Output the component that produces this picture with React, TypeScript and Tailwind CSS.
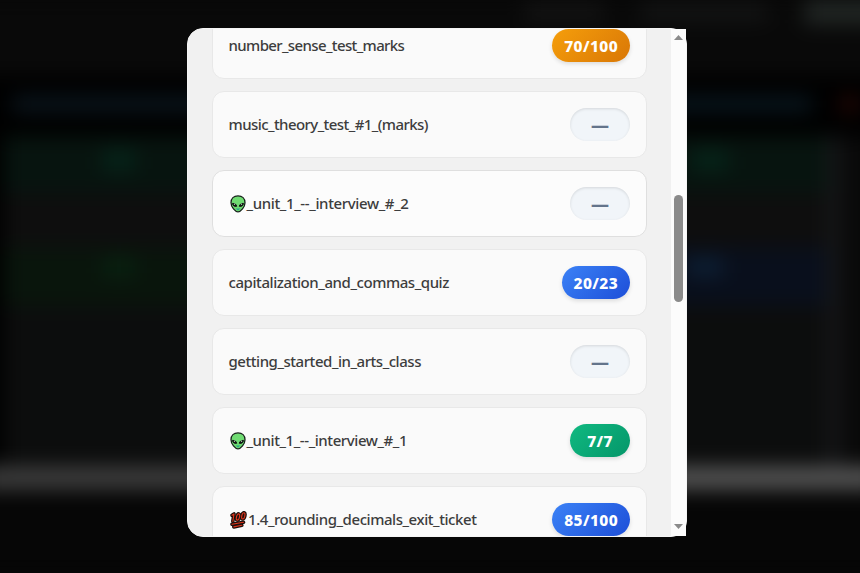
import React from "react";

type Tone = "amber" | "blue" | "green" | "empty";
type Icon = "alien" | "hundred";

interface Row {
  label: string;
  score: string;
  tone: Tone;
  icon?: Icon;
  active?: boolean;
  tracking: string;
}

const rows: Row[] = [
  { label: "number_sense_test_marks", score: "70/100", tone: "amber", tracking: "tracking-[-0.63px]" },
  { label: "music_theory_test_#1_(marks)", score: "—", tone: "empty", tracking: "tracking-[-0.57px]" },
  { label: "_unit_1_--_interview_#_2", score: "—", tone: "empty", icon: "alien", active: true, tracking: "tracking-[-0.36px]" },
  { label: "capitalization_and_commas_quiz", score: "20/23", tone: "blue", tracking: "tracking-[-0.43px]" },
  { label: "getting_started_in_arts_class", score: "—", tone: "empty", tracking: "tracking-[-0.46px]" },
  { label: "_unit_1_--_interview_#_1", score: "7/7", tone: "green", icon: "alien", tracking: "tracking-[-0.42px]" },
  { label: "1.4_rounding_decimals_exit_ticket", score: "85/100", tone: "blue", icon: "hundred", tracking: "tracking-[-0.44px]" },
];

const tones: Record<Tone, string> = {
  amber: "bg-linear-[135deg,#f59e0b,#d97706] text-white shadow-[0_2px_4px_rgba(0,0,0,0.12)]",
  blue: "bg-linear-[135deg,#3b82f6,#1d4ed8] text-white shadow-[0_2px_4px_rgba(0,0,0,0.12)]",
  green: "bg-linear-[135deg,#10b981,#059669] text-white shadow-[0_2px_4px_rgba(0,0,0,0.12)]",
  empty: "bg-[#f1f5f9] text-[#64748b] shadow-[inset_0_1px_3px_rgba(0,0,0,0.12)]",
};

function Alien() {
  return (
    <svg className="h-[18px] w-[18px] shrink-0" viewBox="0 0 18 18">
      <path d="M9 .9C4.800.9 2 3.700 2 7.700c0 4.200 4.300 9.100 7 9.100s7-4.900 7-9.100C16 3.700 13.200.9 9 .9Z" fill="#6fdb72" stroke="#17221b" strokeWidth="1.300" />
      <path d="M3.500 8.400c2.200-.1 3.900.9 4.200 2.900-2.200.5-4-.7-4.200-2.900ZM14.500 8.400c-2.200-.1-3.900.9-4.200 2.900 2.200.5 4-.7 4.200-2.900Z" fill="#101713" stroke="#101713" strokeWidth="1" />
      <path d="M4.900 9.200h1.100M12 9.200h1.100" stroke="#e8ffe9" strokeWidth="1" />
      <path d="M6.700 13.600h4.600L9 15.600Z" fill="#25a58a" />
    </svg>
  );
}

function Hundred() {
  return (
    <svg className="h-[18px] w-[19px] shrink-0" viewBox="0 0 19 18" fill="none" strokeLinecap="round" strokeLinejoin="round">
      <g stroke="#1c0f0c" strokeWidth="3.600">
        <path d="M3 4.200 5 3 3.800 10.300" />
        <ellipse cx="9" cy="6" rx="1.500" ry="3.200" transform="rotate(14 9 6)" />
        <ellipse cx="14.300" cy="4.900" rx="1.500" ry="3.200" transform="rotate(14 14.300 4.900)" />
        <path d="M3 13.300 14.500 11.300M4.800 15.900 12.800 14.300" />
      </g>
      <g stroke="#e0351b" strokeWidth="1.100">
        <path d="M3 4.200 5 3 3.800 10.300" />
        <ellipse cx="9" cy="6" rx="1.500" ry="3.200" transform="rotate(14 9 6)" />
        <ellipse cx="14.300" cy="4.900" rx="1.500" ry="3.200" transform="rotate(14 14.300 4.900)" />
        <path d="M3 13.300 14.500 11.300M4.800 15.900 12.800 14.300" />
      </g>
    </svg>
  );
}

function ScoreRow({ row }: { row: Row }) {
  return (
    <div className={`flex h-[67px] shrink-0 items-center justify-between rounded-xl border pr-4 pl-[15.5px] ${row.active ? "border-[#dfdfdf] bg-[#fcfcfc]" : "border-[#e8e8e8] bg-[#fafafa]"}`}>
      <span className="flex items-center text-[15px] font-medium text-[#3d3d3d]">
        {row.icon === "alien" && <Alien />}
        {row.icon === "hundred" && <span className="pl-[0.5px]"><Hundred /></span>}
        <span className={`whitespace-nowrap ${row.tracking}`}>{row.label}</span>
      </span>
      <span className={`flex h-[33px] min-w-[60px] items-center justify-center rounded-full px-3 font-extrabold ${tones[row.tone]}`}>
        <span className={row.tone === "empty" ? "pt-px text-[18px] leading-none" : "pt-[3px] text-[15.5px] tracking-[0.4px]"}>{row.score}</span>
      </span>
    </div>
  );
}

function Backdrop() {
  return (
    <div className="absolute inset-0 overflow-hidden bg-[#070707]">
      <div className="-mx-5 flex h-full flex-col blur-[10px]">
        <div className="flex h-[76px] shrink-0 items-start justify-end gap-9 bg-[#090909]">
          <div className="mt-1 h-4 w-20 rounded bg-[#151515]" />
          <div className="mt-1 h-4 w-32 rounded bg-[#151616]" />
          <div className="h-6 w-[76px] bg-[#222725]" />
        </div>
        <div className="flex h-[60px] shrink-0 items-center justify-between bg-black px-8">
          <div className="mt-[-4px] h-3.5 w-[300px] bg-[#0c1922]" />
          <div className="mt-[-4px] ml-auto h-3.5 w-[200px] bg-[#0a1a23]" />
          <div className="mt-[-4px] -mr-3 ml-7 h-4 w-5 bg-[#260805]" />
        </div>
        <div className="flex min-h-0 flex-1">
          <div className="w-6 bg-black" />
          <div className="flex w-[823px] flex-col">
            <div className="flex h-[57px] shrink-0 items-start justify-between bg-[#07140f] px-[99px] pt-3.5">
              <div className="h-5 w-8 bg-[#06251a]" />
              <div className="h-5 w-9 bg-[#06251a]" />
            </div>
            <div className="h-[54px] shrink-0 bg-[#0e0e0e]" />
            <div className="flex h-[59px] shrink-0">
              <div className="w-1/2 bg-[#09150c] pt-3 pl-[99px]"><div className="h-4 w-8 bg-[#082411]" /></div>
              <div className="flex w-1/2 justify-end bg-[#090f1c] pt-3 pr-[104px]"><div className="h-4 w-9 bg-[#0e2238]" /></div>
            </div>
            <div className="flex-1 bg-[#0c0d0d]" />
          </div>
          <div className="w-3.5 bg-[#161719]" />
          <div className="flex-1 bg-[#090909]" />
        </div>
        <div className="flex h-[22px] shrink-0">
          <div className="w-1/2 bg-[#404040]" />
          <div className="w-1/2 bg-[#585858]" />
        </div>
        <div className="h-[84px] shrink-0 bg-[#060606]" />
      </div>
    </div>
  );
}

function Scrollbar() {
  return (
    <div className="flex w-[15px] shrink-0 flex-col items-center bg-[#fcfcfc]">
      <svg className="mt-1.5 h-[5px] w-[9px] shrink-0" viewBox="0 0 9 5"><path d="M4.500 0 9 5H0Z" fill="#8b8b8b" /></svg>
      <div className="mt-[155px] h-[107px] w-[9px] shrink-0 rounded-full bg-[#8b8b8b]" />
      <svg className="mt-auto mb-[7px] h-[5px] w-[9px] shrink-0" viewBox="0 0 9 5"><path d="M0 0H9L4.500 5Z" fill="#8b8b8b" /></svg>
    </div>
  );
}

export default function App() {
  return (
    <main className="relative h-[573px] w-[860px] overflow-hidden bg-black font-['Noto_Sans','Open_Sans',sans-serif]">
      <Backdrop />
      <section className="relative mt-7 ml-[187px] h-[509px] w-[500px] rounded-2xl border border-[#f5f5f5] bg-[#f1f1f1]">
        <div className="flex h-full">
          <div className="flex min-w-0 flex-1 flex-col overflow-hidden rounded-l-[15px] pr-6 pl-6">
            <div className="-mt-[17px] flex flex-col gap-3">
              {rows.map((row) => <ScoreRow key={row.label} row={row} />)}
            </div>
          </div>
          <Scrollbar />
        </div>
      </section>
    </main>
  );
}
